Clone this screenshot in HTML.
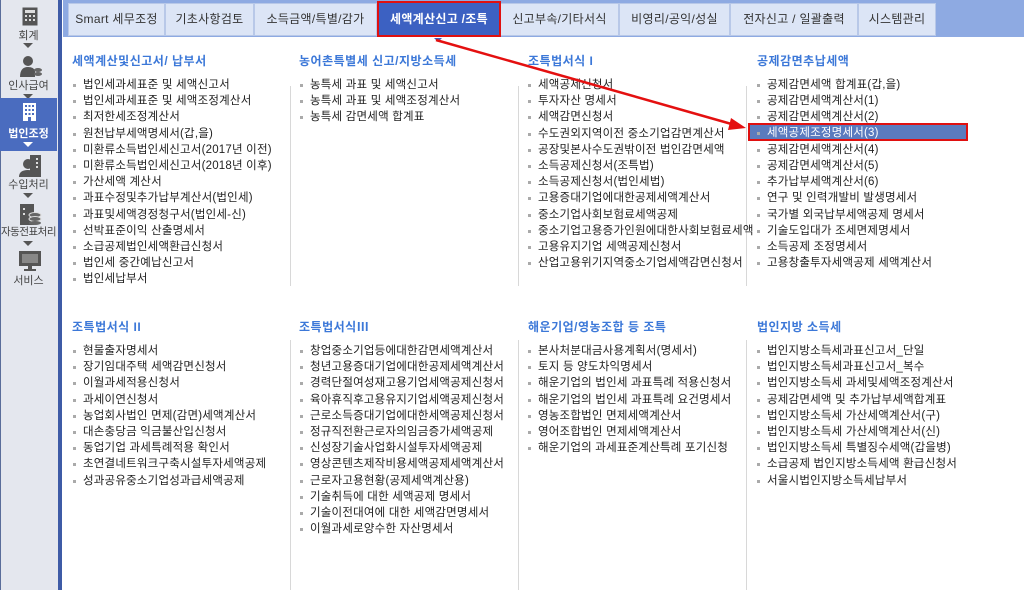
<!DOCTYPE html>
<html><head><meta charset="utf-8"><style>
*{margin:0;padding:0;box-sizing:border-box}
body{width:1024px;height:590px;position:relative;background:#fff;font-family:"Liberation Sans","Noto Sans CJK KR","NanumGothic",sans-serif;overflow:hidden;color:#222}
#side{position:absolute;left:0;top:0;width:58px;height:590px;background:#e4e7ee;border-left:1px solid #5a6d9a}
#sideb{position:absolute;left:58px;top:0;width:4px;height:590px;background:#3e5ba6}
.si{position:absolute;left:0;width:57px;text-align:center;font-size:11px;color:#444}
.si.sel{background:#4a6cbf;color:#fff;font-weight:bold}
.arr{position:absolute;left:23px;width:0;height:0;border-left:5px solid transparent;border-right:5px solid transparent;border-top:5px solid #555}
#nav{position:absolute;left:63px;top:0;width:961px;height:37px;background:#8eaae2}
.tab{position:absolute;top:3px;height:33px;background:#dce5f6;border:1px solid #b8c8e8;font-size:12px;color:#333;text-align:center;line-height:31px;letter-spacing:0.3px}
.tab.sel{background:#3c61c2;color:#fff;font-weight:bold;border:2px solid #e01010;top:1px;height:36px;line-height:32px}
.h{position:absolute;font-size:12px;color:#3c78d8;font-weight:bold;letter-spacing:0.5px}
.list{position:absolute;font-size:11.5px;line-height:16.2px;color:#222;white-space:nowrap;letter-spacing:0.2px}
.list div{padding-left:11px;position:relative}
.list div:before{content:"";position:absolute;left:1px;top:7px;width:3px;height:3px;background:#aaa}
.vl{position:absolute;width:1px;background:#d8d8d8}
</style></head><body>
<div id="side"></div><div id="sideb"></div>
<!-- sidebar items -->
<svg style="position:absolute;left:22px;top:7px" width="16" height="19"><rect x="0.5" y="0.5" width="15" height="18" fill="#555"/><rect x="3" y="3" width="10" height="3" fill="#ddd"/><g fill="#ddd"><rect x="3" y="8" width="2" height="2"/><rect x="7" y="8" width="2" height="2"/><rect x="11" y="8" width="2" height="2"/><rect x="3" y="12" width="2" height="2"/><rect x="7" y="12" width="2" height="2"/><rect x="11" y="12" width="2" height="2"/></g></svg>
<div class="si" style="top:27px">회계</div><div class="arr" style="top:43px"></div>
<svg style="position:absolute;left:19px;top:55px" width="24" height="22"><circle cx="9" cy="6" r="5" fill="#555"/><path d="M1 22 Q1 12 9 12 Q15 12 16 16 L16 22Z" fill="#555"/><ellipse cx="19" cy="15" rx="4" ry="2" fill="#666"/><ellipse cx="19" cy="19" rx="4" ry="2" fill="#666"/></svg>
<div class="si" style="top:77px">인사급여</div><div class="arr" style="top:94px;"></div>
<div class="si sel" style="top:98px;height:53px"></div>
<svg style="position:absolute;left:23px;top:103px" width="13" height="18"><rect width="13" height="18" fill="#fff"/><g fill="#4a6cbf"><rect x="2" y="2" width="2" height="2"/><rect x="5.5" y="2" width="2" height="2"/><rect x="9" y="2" width="2" height="2"/><rect x="2" y="6" width="2" height="2"/><rect x="5.5" y="6" width="2" height="2"/><rect x="9" y="6" width="2" height="2"/><rect x="2" y="10" width="2" height="2"/><rect x="5.5" y="10" width="2" height="2"/><rect x="9" y="10" width="2" height="2"/><rect x="5" y="14" width="3" height="4"/></g></svg>
<div class="si sel" style="top:125px;background:none">법인조정</div><div class="arr" style="top:142px;border-top-color:#fff"></div>
<svg style="position:absolute;left:19px;top:155px" width="24" height="22"><rect x="11" y="0" width="11" height="22" fill="#555"/><g fill="#ddd"><rect x="17" y="3" width="2" height="2"/><rect x="17" y="7" width="2" height="2"/><rect x="17" y="11" width="2" height="2"/></g><circle cx="9" cy="9" r="5" fill="#555"/><path d="M0 22 Q0 15 9 15 Q16 15 16 22Z" fill="#555"/></svg>
<div class="si" style="top:176px">수입처리</div><div class="arr" style="top:193px"></div>
<svg style="position:absolute;left:20px;top:204px" width="22" height="21"><rect x="0" y="0" width="14" height="21" fill="#555"/><g fill="#ddd"><rect x="3" y="4" width="2" height="2"/><rect x="3" y="9" width="2" height="2"/></g><ellipse cx="15" cy="11" rx="6" ry="2.5" fill="#666" stroke="#ddd"/><ellipse cx="15" cy="15" rx="6" ry="2.5" fill="#666" stroke="#ddd"/><ellipse cx="15" cy="19" rx="6" ry="2" fill="#666"/></svg>
<div class="si" style="top:224px;font-size:10.5px;letter-spacing:-0.5px">자동전표처리</div><div class="arr" style="top:241px"></div>
<svg style="position:absolute;left:19px;top:251px" width="22" height="20"><rect x="0" y="0" width="22" height="15" fill="#555"/><rect x="3" y="3" width="16" height="9" fill="#888"/><rect x="9" y="15" width="4" height="3" fill="#555"/><rect x="5" y="18" width="12" height="2" fill="#555"/></svg>
<div class="si" style="top:272px">서비스</div>

<div id="nav"></div>
<div class="tab" style="left:68px;width:97px">Smart 세무조정</div>
<div class="tab" style="left:165px;width:89px">기초사항검토</div>
<div class="tab" style="left:254px;width:123px">소득금액/특별/감가</div>
<div class="tab" style="left:500px;width:119px">신고부속/기타서식</div>
<div class="tab" style="left:619px;width:111px">비영리/공익/성실</div>
<div class="tab" style="left:730px;width:128px">전자신고 / 일괄출력</div>
<div class="tab" style="left:858px;width:78px">시스템관리</div>
<div class="tab sel" style="left:377px;width:124px">세액계산신고 /조특</div>
<div style="position:absolute;left:434px;top:38px;border-left:4px solid transparent;border-right:4px solid transparent;border-top:4px solid #3c61c2"></div>

<div class="vl" style="left:290px;top:86px;height:200px"></div>
<div class="vl" style="left:518px;top:86px;height:200px"></div>
<div class="vl" style="left:746px;top:86px;height:200px"></div>
<div class="vl" style="left:290px;top:340px;height:250px"></div>
<div class="vl" style="left:518px;top:340px;height:250px"></div>
<div class="vl" style="left:746px;top:340px;height:250px"></div>

<div class="h" style="left:72px;top:52px">세액계산및신고서/ 납부서</div>
<div class="list" style="left:72px;top:77px">
<div>법인세과세표준 및 세액신고서</div><div>법인세과세표준 및 세액조정계산서</div><div>최저한세조정계산서</div><div>원천납부세액명세서(갑,을)</div><div>미환류소득법인세신고서(2017년 이전)</div><div>미환류소득법인세신고서(2018년 이후)</div><div>가산세액 계산서</div><div>과표수정및추가납부계산서(법인세)</div><div>과표및세액경정청구서(법인세-신)</div><div>선박표준이익 산출명세서</div><div>소급공제법인세액환급신청서</div><div>법인세 중간예납신고서</div><div>법인세납부서</div></div>

<div class="h" style="left:299px;top:52px">농어촌특별세 신고/지방소득세</div>
<div class="list" style="left:299px;top:77px">
<div>농특세 과표 및 세액신고서</div><div>농특세 과표 및 세액조정계산서</div><div>농특세 감면세액 합계표</div></div>

<div class="h" style="left:528px;top:52px">조특법서식 I</div>
<div class="list" style="left:527px;top:77px">
<div>세액공제신청서</div><div>투자자산 명세서</div><div>세액감면신청서</div><div>수도권외지역이전 중소기업감면계산서</div><div>공장및본사수도권밖이전 법인감면세액</div><div>소득공제신청서(조특법)</div><div>소득공제신청서(법인세법)</div><div>고용증대기업에대한공제세액계산서</div><div>중소기업사회보험료세액공제</div><div>중소기업고용증가인원에대한사회보험료세액</div><div>고용유지기업 세액공제신청서</div><div>산업고용위기지역중소기업세액감면신청서</div></div>

<div class="h" style="left:757px;top:52px">공제감면추납세액</div>
<div class="list" style="left:756px;top:77px">
<div>공제감면세액 합계표(갑,을)</div><div>공제감면세액계산서(1)</div><div>공제감면세액계산서(2)</div><div style="color:#fff">세액공제조정명세서(3)</div><div>공제감면세액계산서(4)</div><div>공제감면세액계산서(5)</div><div>추가납부세액계산서(6)</div><div>연구 및 인력개발비 발생명세서</div><div>국가별 외국납부세액공제 명세서</div><div>기술도입대가 조세면제명세서</div><div>소득공제 조정명세서</div><div>고용창출투자세액공제 세액계산서</div></div>
<div style="position:absolute;left:748px;top:123px;width:220px;height:18px;background:#5b7bbe;border:2px solid #e01010;z-index:-0"></div>
<div class="list" style="left:756px;top:125.4px;color:#fff"><div style="color:#fff">세액공제조정명세서(3)</div></div>

<div class="h" style="left:72px;top:318px">조특법서식 II</div>
<div class="list" style="left:72px;top:343px">
<div>현물출자명세서</div><div>장기임대주택 세액감면신청서</div><div>이월과세적용신청서</div><div>과세이연신청서</div><div>농업회사법인 면제(감면)세액계산서</div><div>대손충당금 익금불산입신청서</div><div>동업기업 과세특례적용 확인서</div><div>초연결네트워크구축시설투자세액공제</div><div>성과공유중소기업성과급세액공제</div></div>

<div class="h" style="left:299px;top:318px">조특법서식Ⅲ</div>
<div class="list" style="left:299px;top:343px">
<div>창업중소기업등에대한감면세액계산서</div><div>청년고용증대기업에대한공제세액계산서</div><div>경력단절여성재고용기업세액공제신청서</div><div>육아휴직후고용유지기업세액공제신청서</div><div>근로소득증대기업에대한세액공제신청서</div><div>정규직전환근로자의임금증가세액공제</div><div>신성장기술사업화시설투자세액공제</div><div>영상콘텐츠제작비용세액공제세액계산서</div><div>근로자고용현황(공제세액계산용)</div><div>기술취득에 대한 세액공제 명세서</div><div>기술이전대여에 대한 세액감면명세서</div><div>이월과세로양수한 자산명세서</div></div>

<div class="h" style="left:528px;top:318px">해운기업/영농조합 등 조특</div>
<div class="list" style="left:527px;top:343px">
<div>본사처분대금사용계획서(명세서)</div><div>토지 등 양도차익명세서</div><div>해운기업의 법인세 과표특례 적용신청서</div><div>해운기업의 법인세 과표특례 요건명세서</div><div>영농조합법인 면제세액계산서</div><div>영어조합법인 면제세액계산서</div><div>해운기업의 과세표준계산특례 포기신청</div></div>

<div class="h" style="left:757px;top:318px">법인지방 소득세</div>
<div class="list" style="left:756px;top:343px">
<div>법인지방소득세과표신고서_단일</div><div>법인지방소득세과표신고서_복수</div><div>법인지방소득세 과세및세액조정계산서</div><div>공제감면세액 및 추가납부세액합계표</div><div>법인지방소득세 가산세액계산서(구)</div><div>법인지방소득세 가산세액계산서(신)</div><div>법인지방소득세 특별징수세액(갑을병)</div><div>소급공제 법인지방소득세액 환급신청서</div><div>서울시법인지방소득세납부서</div></div>

<svg style="position:absolute;left:0;top:0" width="1024" height="590"><line x1="436" y1="40" x2="735" y2="125" stroke="#e41010" stroke-width="2.5"/><polygon points="746,128 731,118 728,130" fill="#e41010"/></svg>
</body></html>
